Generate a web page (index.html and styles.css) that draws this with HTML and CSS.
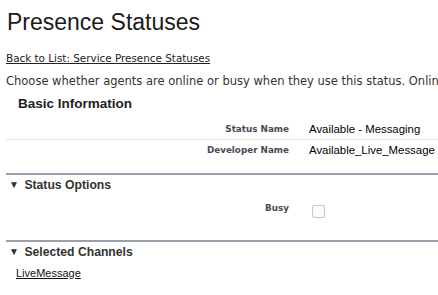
FILE: index.html
```html
<!DOCTYPE html>
<html lang="en">
<head>
    <meta charset="UTF-8">
    <title>Presence Statuses</title>
    <link rel="stylesheet" href="styles.css">
</head>
<body>
    <h1 class="page-title">Presence Statuses</h1>
    <a class="back-link" href="#">Back to List: Service Presence Statuses</a>
    <p class="intro">Choose whether agents are online or busy when they use this status. Online statuses let agents receive work.</p>

    <div class="section">
        <h3 class="section-title plain">Basic Information</h3>
        <div class="detail-row">
            <div class="label">Status Name</div>
            <div class="value">Available - Messaging</div>
        </div>
        <div class="detail-row lined">
            <div class="label">Developer Name</div>
            <div class="value">Available_Live_Message</div>
        </div>
    </div>

    <div class="section bar">
        <h3 class="section-title"><span class="arrow">&#9660;</span> Status Options</h3>
        <div class="detail-row tall">
            <div class="label">Busy</div>
            <div class="value"><span class="checkbox"></span></div>
        </div>
    </div>

    <div class="section bar last">
        <h3 class="section-title"><span class="arrow">&#9660;</span> Selected Channels</h3>
        <a class="channel" href="#">LiveMessage</a>
    </div>
</body>
</html>
```

FILE: styles.css
```css
body {
    margin: 0;
    padding: 0 0 0 6px;
    background-color: #ffffff;
    font-family: Arial, "Liberation Sans", sans-serif;
    color: #000;
    overflow: hidden;
    white-space: nowrap;
}

.page-title {
    font-size: 23px;
    font-weight: normal;
    margin: 8px 0 0 1px;
    color: #1a1a1a;
    line-height: 28px;
}

.back-link {
    display: block;
    margin-top: 16px;
    font-family: "DejaVu Sans", Verdana, sans-serif;
    font-size: 10.4px;
    color: #222;
    line-height: 12px;
}

.intro {
    margin: 10px 0 0 0;
    font-family: "DejaVu Sans", Verdana, sans-serif;
    font-size: 11.5px;
    color: #333;
    line-height: 14px;
}

.section-title {
    margin: 0;
    font-size: 12.2px;
    font-weight: bold;
    color: #333;
    line-height: 18px;
}

.section-title.plain {
    padding: 7px 0 6px 12px;
    font-size: 13.5px;
    color: #222;
}

.bar {
    border-top: 2px solid #9a9fae;
    margin-top: 14px;
}

.bar.last {
    margin-top: 19px;
}

.bar .section-title {
    padding: 1px 0 0 3px;
}

.arrow {
    font-size: 10px;
    display: inline-block;
    width: 12px;
    vertical-align: 1px;
}

.detail-row {
    display: grid;
    grid-template-columns: 283px 1fr;
    align-items: center;
    height: 20px;
}

.detail-row.lined {
    border-top: 1px solid #e6e6e6;
    height: 19px;
}

.detail-row.tall {
    height: 26px;
    margin-top: 1px;
}

.label {
    text-align: right;
    font-family: "DejaVu Sans", Verdana, sans-serif;
    font-size: 8.8px;
    font-weight: bold;
    color: #4a4a56;
}

.value {
    display: flex;
    align-items: center;
    padding-left: 20px;
    font-size: 11.4px;
    color: #000;
}

.checkbox {
    display: block;
    width: 11px;
    height: 11px;
    border: 1px solid #c8c8c8;
    border-radius: 2px;
    background-color: #fafafa;
    margin: 6px 0 0 3px;
}

.channel {
    display: block;
    margin: 6px 0 0 10px;
    font-size: 11px;
    line-height: 13px;
    color: #111;
}
```
